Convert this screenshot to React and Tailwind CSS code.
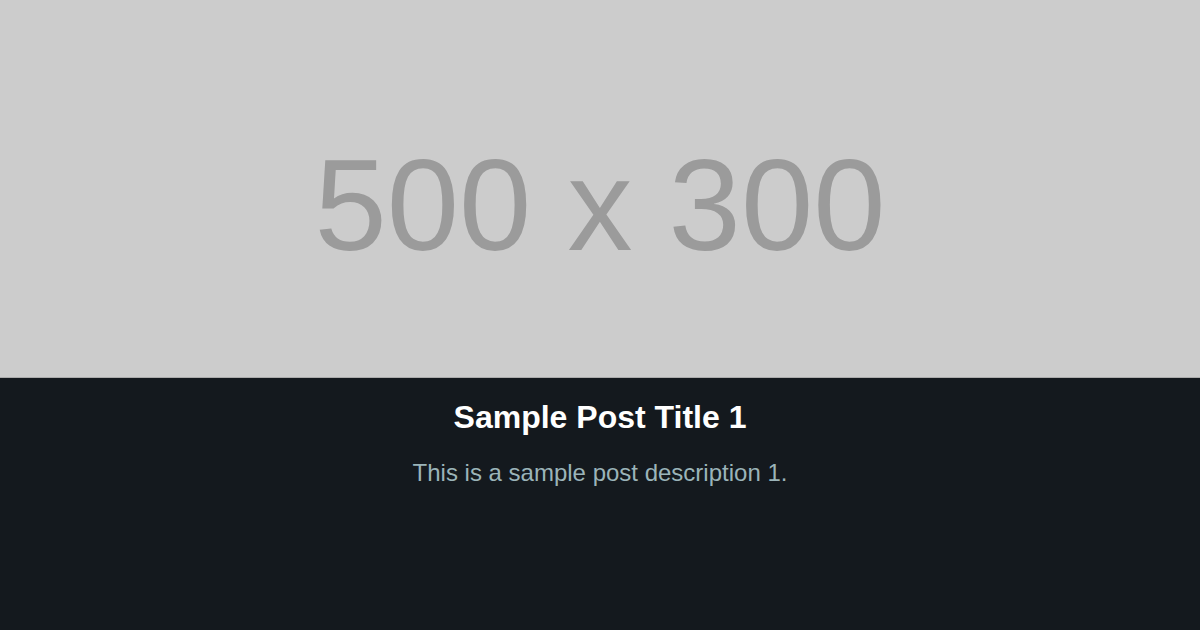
export default function App() {
  return (
    <div className="min-h-[630px] w-full bg-[#14191e]" style={{ fontFamily: '"Liberation Sans", Arial, sans-serif' }}>
      {/* placeholder image */}
      <div className="h-[378px] w-full bg-[#cccccc] border-b border-[#ababab] flex justify-center pt-[140px]">
        <span className="text-[130px] leading-[130px] text-[#9b9b9b] whitespace-nowrap">500 x 300</span>
      </div>

      {/* card body */}
      <div className="flex flex-col items-center pt-[21px] text-center">
        <h2 className="text-[32px] leading-[36px] font-bold text-white">Sample Post Title 1</h2>
        <p className="mt-[24px] text-[24px] leading-[28px] text-[#9bb4b9]">This is a sample post description 1.</p>
      </div>
    </div>
  );
}
